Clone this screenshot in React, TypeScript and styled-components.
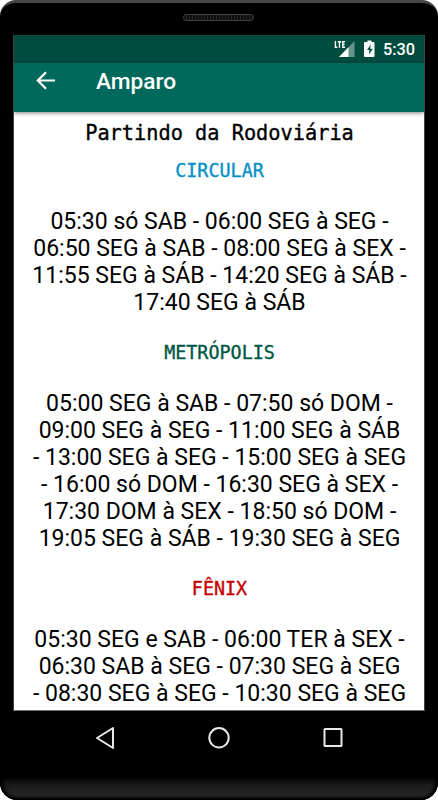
import React from "react";
import styled, { createGlobalStyle } from "styled-components";

const GlobalStyle = createGlobalStyle`
  * { box-sizing: border-box; }
  body { margin: 0; background: #fff; font-family: Roboto, sans-serif; overflow: hidden; }
`;

const Phone = styled.main`
  width: 438px;
  height: 800px;
  display: flex;
  flex-direction: column;
  overflow: hidden;
  background: #000;
  border-top: 3px solid #454545;
  border-radius: 16px 16px 17px 17px;
`;

const Earpiece = styled.div`
  height: 32px;
  flex: none;
  padding-top: 11px;
  padding-right: 1px;
  display: flex;
  justify-content: center;
`;

const Speaker = styled.div`
  width: 71px;
  height: 7px;
  border: 1px solid #414141;
  border-radius: 4px;
  background: repeating-linear-gradient(90deg, #0b0b0b 0 2px, #292929 2px 3px);
`;

const Screen = styled.div`
  width: 412px;
  height: 676px;
  margin-left: 13px;
  flex: none;
  display: flex;
  flex-direction: column;
  overflow: hidden;
  background: #fff;
  border-left: 1px solid #424242;
  border-right: 1px solid #424242;
  border-bottom: 1px solid #707070;
`;

const StatusBar = styled.div`
  height: 28px;
  flex: none;
  display: flex;
  align-items: center;
  justify-content: flex-end;
  padding-right: 9px;
  background: #004d40;
  color: #fff;
`;

const Clock = styled.time`
  margin-left: 7px;
  font: 500 16.3px/29px Roboto, sans-serif;
`;

const AppBar = styled.header`
  height: 49px;
  flex: none;
  display: flex;
  align-items: center;
  padding: 0 0 12px 20px;
  background: #00695c;
  color: #fff;
  box-shadow: 0 1px 4px rgba(0, 0, 0, 0.5);
`;

const Title = styled.h1`
  margin: 0 0 0 37px;
  font: 500 22.7px/36px Roboto, sans-serif;
`;

const BackArrow = styled.svg`
  margin-bottom: 3px;
`;

const Content = styled.div`
  flex: 1;
  overflow: hidden;
  padding: 7px 0 0 1px;
  text-align: center;
`;

const Origin = styled.h2`
  margin: 0 0 12px;
  font: 400 20.3px/28px "DejaVu Sans Mono", monospace;
  color: #000;
  -webkit-text-stroke: 0.35px #000;
  transform: scaleY(1.06);
`;

const Company = styled.h3<{ $color: string }>`
  margin: 0;
  font: 400 18.4px/24px "DejaVu Sans Mono", monospace;
  color: ${(p) => p.$color};
  -webkit-text-stroke: 0.35px ${(p) => p.$color};
  transform: scaleY(1.04);
`;

const Timetable = styled.div`
  margin: 25px 0 25px;
  font: 400 23px/27px Roboto, sans-serif;
  color: #000;
`;

const Line = styled.div`
  white-space: nowrap;
`;

const NavBar = styled.nav`
  height: 67px;
  flex: none;
  padding: 15px 0 0 94px;
  display: flex;
  gap: 90px;
`;

const Chin = styled.div`
  flex: 1;
  border-radius: 0 0 17px 17px;
  background: linear-gradient(#0b0b0b, #1b1b1b 35%, #252525 80%, #151515);
  box-shadow: inset 0 -2px 2px #000, inset 3px 0 4px #000, inset -3px 0 4px #000;
`;

const sections = [
  {
    name: "CIRCULAR",
    color: "#078fc8",
    lines: [
      "05:30 só SAB - 06:00 SEG à SEG -",
      "06:50 SEG à SAB - 08:00 SEG à SEX -",
      "11:55 SEG à SÁB - 14:20 SEG à SÁB -",
      "17:40 SEG à SÁB",
    ],
  },
  {
    name: "METRÓPOLIS",
    color: "#005744",
    lines: [
      "05:00 SEG à SAB - 07:50 só DOM -",
      "09:00 SEG à SEG - 11:00 SEG à SÁB",
      "- 13:00 SEG à SEG - 15:00 SEG à SEG",
      "- 16:00 só DOM - 16:30 SEG à SEX -",
      "17:30 DOM à SEX - 18:50 só DOM -",
      "19:05 SEG à SÁB - 19:30 SEG à SEG",
    ],
  },
  {
    name: "FÊNIX",
    color: "#c80000",
    lines: [
      "05:30 SEG e SAB - 06:00 TER à SEX -",
      "06:30 SAB à SEG - 07:30 SEG à SEG",
      "- 08:30 SEG à SEG - 10:30 SEG à SEG",
    ],
  },
];

export default function App() {
  return (
    <>
      <GlobalStyle />
      <Phone>
        <Earpiece>
          <Speaker />
        </Earpiece>
        <Screen>
          <StatusBar>
            <svg width="42" height="28" viewBox="0 0 42 28" role="img" aria-label="LTE">
              <path d="M20.5 6v16H5z" fill="#fff" fillOpacity=".4" />
              <path d="M14.5 12.2V22H5z" fill="#fff" />
              <path d="M0 5h11v8.5H0z" fill="#004d40" />
              <path d="M1.4 6v6.3h2M3.8 6.7h3.4M5.5 6.7v6M11 6.7H8.8v5.6H11M8.8 9.4h1.9" fill="none" stroke="#fff" strokeWidth="1.4" />
              <path
                d="M33.5 5.5h4V7h2q1 0 1 1v13q0 1-1 1h-8.5q-1 0-1-1V8q0-1 1-1h2.5zM36.8 9.5L33 15h2.4l-.6 4.7 4-6h-2.6z"
                fill="#fff"
                fillRule="evenodd"
              />
            </svg>
            <Clock>5:30</Clock>
          </StatusBar>
          <AppBar>
            <BackArrow width="25" height="24" viewBox="0 0 25 24" aria-label="Voltar">
              <path d="M21 12.5H4M12 4.3L3.8 12.5 12 20.7" fill="none" stroke="#fff" strokeWidth="2.2" />
            </BackArrow>
            <Title>Amparo</Title>
          </AppBar>
          <Content>
            <Origin>Partindo da Rodoviária</Origin>
            {sections.map((s) => (
              <section key={s.name}>
                <Company $color={s.color}>{s.name}</Company>
                <Timetable>
                  {s.lines.map((l) => (
                    <Line key={l}>{l}</Line>
                  ))}
                </Timetable>
              </section>
            ))}
          </Content>
        </Screen>
        <NavBar>
          <svg width="23" height="24" viewBox="0 0 23 24" aria-label="Voltar">
            <path d="M19 2v20L3 12z" fill="none" stroke="#e8e8e8" strokeWidth="2" strokeLinejoin="round" />
          </svg>
          <svg width="24" height="24" viewBox="0 0 24 24" aria-label="Início">
            <circle cx="12" cy="11.8" r="9.7" fill="none" stroke="#e8e8e8" strokeWidth="2" />
          </svg>
          <svg width="24" height="24" viewBox="0 0 24 24" aria-label="Recentes">
            <rect x="3.5" y="3" width="17" height="17" rx=".5" fill="none" stroke="#e8e8e8" strokeWidth="2" />
          </svg>
        </NavBar>
        <Chin />
      </Phone>
    </>
  );
}
